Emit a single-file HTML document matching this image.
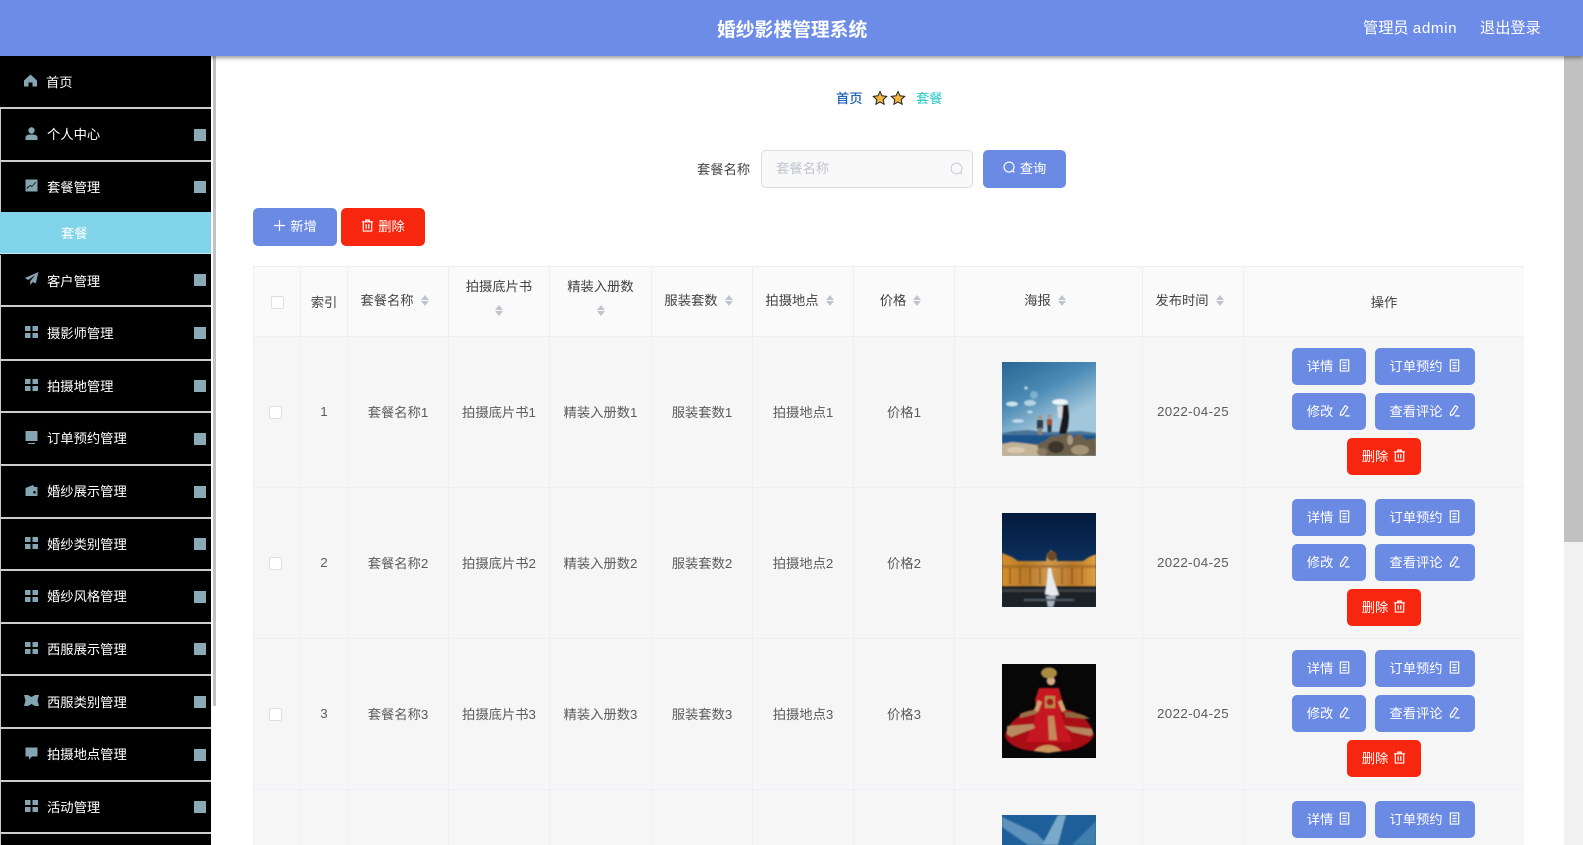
<!DOCTYPE html>
<html lang="zh-CN"><head><meta charset="utf-8"><title>婚纱影楼管理系统</title>
<style>
*{box-sizing:border-box}
html,body{margin:0;padding:0;width:1583px;height:845px;overflow:hidden;background:#fff}
body{position:relative;font-family:"Liberation Sans","Noto Sans CJK SC",sans-serif;font-size:13.3px;color:#666}
.hd{position:absolute;left:0;top:0;width:1583px;height:56px;background:#6d8ce7;box-shadow:0 2px 4px rgba(0,0,0,.4);z-index:5;color:#fff}
.hd div{position:absolute;white-space:nowrap;line-height:56px;top:1px}
.side{position:absolute;left:0;top:56px;width:211px;height:789px;background:#000}
.it{position:absolute;left:0;width:211px;background:#000;border-left:1px solid #c8c8c8;display:flex;align-items:center;color:#fff;font-size:13.3px}
.it span{position:absolute;left:46px;transform:translateY(-1px)}
.it svg{position:absolute;left:23px;top:50%;margin-top:-9px;width:15px;height:15px;fill:#86a5b2}
.it b{position:absolute;left:193px;top:50%;margin-top:-6px;width:12px;height:12px;background:#8aaab6}
.bar{position:absolute;left:0;width:211px;height:2px;background:#cdcdcd}
.sub{position:absolute;left:0;top:212px;width:211px;height:42px;background:#80d3e8;color:#fff;line-height:44px;padding-left:61px;border-bottom:1px solid #c8e6ee}
.t{position:absolute;white-space:nowrap}
.btn{position:absolute;height:37px;border-radius:5px;background:#6b8ae4;color:#fff;display:flex;align-items:center;justify-content:center;font-size:13.3px;white-space:nowrap;padding-bottom:2px}
.btn svg{width:13px;height:13px;fill:none;stroke:#fff;stroke-width:1.25;margin-left:5px;flex:none}
.btn.pre svg{margin:0 4px 0 0}
.red{background:#f7270f}
.wrap{position:absolute;left:253px;top:266px;width:1271px;height:579px;overflow:hidden}
table{width:1271px;border-collapse:collapse;table-layout:fixed;background:#f6f6f7}
th,td{border:1px solid #eeeff2;text-align:center;padding:0;font-weight:400;vertical-align:middle}
th{background:#fafafa;height:70px;color:#444;font-size:13.3px;line-height:25px;padding-top:1px}
th.s{padding:0 7px 2px 0}
th.m{padding:0 0 5px 0}
th.m .c{margin:0;position:relative;top:-1px}
td{height:151px;color:#5c5c5c;padding-bottom:2px}
td.d{letter-spacing:.4px}
.c{display:inline-block;width:8px;height:11px;margin-left:7px;vertical-align:-1px;position:relative}
.c:before,.c:after{content:"";position:absolute;left:0;border-left:4px solid transparent;border-right:4px solid transparent}
.c:before{top:0;border-bottom:5px solid #c0c4cc}
.c:after{bottom:0;border-top:5px solid #c0c4cc}
.cb{display:inline-block;width:13px;height:13px;background:#fff;border:1px solid #dcdfe6;border-radius:2px;vertical-align:middle}
td .cb{margin-left:-3px;position:relative;top:1px}
.pic{position:absolute;left:1002px;width:94px;height:94px;display:block}
</style></head><body>
<svg width="0" height="0" style="position:absolute"><defs>
<symbol id="doc" viewBox="0 0 14 14"><path d="M2.500 1h9v12h-9zM4.700 4h4.600M4.700 7h4.600M4.700 10h4.600"/></symbol>
<symbol id="pen" viewBox="0 0 14 14"><path d="M7.800 1.800l2.700 1.600-5 8-2.800.8-.1-2.700zM7.500 12.800h5"/></symbol>
<symbol id="bin" viewBox="0 0 14 14"><path d="M1 3h12M5 3V1.200h4V3M2.500 3v10h9V3M5.600 5.500v5M8.400 5.500v5"/></symbol>
<symbol id="find" viewBox="0 0 14 14"><circle cx="6.500" cy="6.500" r="5.400"/><path d="M10.500 10.500l1.800 1.800"/></symbol>
<symbol id="grid" viewBox="0 0 15 15"><path d="M1 2h5.500v5H1zM8.500 2H14v5H8.500zM1 9h5.500v5H1zM8.500 9H14v5H8.500z"/></symbol>
</defs></svg>

<div class="hd">
<div style="left:717px;width:150px;font-size:18.8px;font-weight:700;text-align:center;top:2px">婚纱影楼管理系统</div>
<div style="left:1363px;font-size:15.2px">管理员 <span style="letter-spacing:.6px">admin</span></div>
<div style="left:1480px;font-size:15.2px">退出登录</div>
</div>

<div class="side"></div>
<div class="it" style="top:56px;height:51px;border-left:0"><svg viewBox="0 0 15 15"><path d="M7.500 1.500L1 7.500V13.500H5.500V9.500H9.500V13.500H14V7.500z"/></svg><span style="transform:none">首页</span></div>
<div class="bar" style="top:107px"></div>
<div class="it" style="top:109px;height:51px"><svg viewBox="0 0 15 15"><circle cx="7.500" cy="4.500" r="3.200"/><path d="M1.500 14v-2.500c0-2 2-3 6-3s6 1 6 3V14z"/></svg><span>个人中心</span><b></b></div>
<div class="bar" style="top:160px"></div>
<div class="it" style="top:162px;height:50px"><svg viewBox="0 0 15 15"><path fill-rule="evenodd" d="M1.500 1.500h12v12h-12zM3 11l3-3 2 1 4-4.500-.6-.5L8 8 6 7l-3.500 3z"/></svg><span>套餐管理</span><b></b></div>
<div class="sub">套餐</div>
<div class="it" style="top:255px;height:50px"><svg viewBox="0 0 15 15"><path d="M14.500 1L.8 7l3.500 2 7-5-5 6v4l2.500-3 3 1.500z"/></svg><span style="transform:none">客户管理</span><b></b></div>
<div class="bar" style="top:305px"></div>
<div class="it" style="top:307px;height:52px"><svg><use href="#grid"/></svg><span>摄影师管理</span><b></b></div>
<div class="bar" style="top:359px"></div>
<div class="it" style="top:361px;height:50px"><svg><use href="#grid"/></svg><span>拍摄地管理</span><b></b></div>
<div class="bar" style="top:411px"></div>
<div class="it" style="top:413px;height:51px"><svg viewBox="0 0 15 15"><path d="M1.500 1h12v10h-12zM4 13h7v1H4z"/></svg><span>订单预约管理</span><b></b></div>
<div class="bar" style="top:464px"></div>
<div class="it" style="top:466px;height:51px"><svg viewBox="0 0 15 15"><path fill-rule="evenodd" d="M1.500 5L9 2l1.500 2h3v9h-12zM10.500 8a1.300 1.300 0 100 2.600 1.300 1.300 0 000-2.600z"/></svg><span>婚纱展示管理</span><b></b></div>
<div class="bar" style="top:517px"></div>
<div class="it" style="top:519px;height:50px"><svg><use href="#grid"/></svg><span>婚纱类别管理</span><b></b></div>
<div class="bar" style="top:569px"></div>
<div class="it" style="top:571px;height:51px"><svg><use href="#grid"/></svg><span>婚纱风格管理</span><b></b></div>
<div class="bar" style="top:622px"></div>
<div class="it" style="top:624px;height:50px"><svg><use href="#grid"/></svg><span>西服展示管理</span><b></b></div>
<div class="bar" style="top:674px"></div>
<div class="it" style="top:676px;height:51px"><svg viewBox="0 0 15 15"><path d="M0 2h4l3.500 2L11 2h4l-1.500 5.500L15 13h-4L7.500 11 4 13H0l1.500-5.500z"/></svg><span style="transform:none">西服类别管理</span><b></b></div>
<div class="bar" style="top:727px"></div>
<div class="it" style="top:729px;height:51px"><svg viewBox="0 0 15 15"><path d="M1.500 1.500h12v9H8l-3 3v-3H1.500z"/></svg><span>拍摄地点管理</span><b></b></div>
<div class="bar" style="top:780px"></div>
<div class="it" style="top:782px;height:50px"><svg><use href="#grid"/></svg><span>活动管理</span><b></b></div>
<div class="bar" style="top:832px"></div>
<div class="it" style="top:834px;height:11px"></div>
<div style="position:absolute;left:213px;top:56px;width:3px;height:650px;background:#c2c2c2"></div>

<div style="position:absolute;left:1564px;top:56px;width:19px;height:789px;background:#f1f1f1"></div>
<div style="position:absolute;left:1564px;top:56px;width:19px;height:486px;background:#c1c1c1"></div>

<div class="t" style="left:836px;top:89px;line-height:20px;color:#1f5fb2;font-weight:500">首页</div>
<svg style="position:absolute;left:872px;top:90px" width="34" height="16" viewBox="0 0 34 16"><path d="M8 1.500l2 4.300 4.700.6-3.500 3.200.9 4.700L8 12l-4.100 2.300.9-4.700L1.300 6.400 6 5.800z" fill="#f5b53c" stroke="#222" stroke-width="1"/><path d="M26 1.500l2 4.300 4.700.6-3.500 3.200.9 4.700L26 12l-4.100 2.300.9-4.700-3.500-3.200 4.700-.6z" fill="#f5b53c" stroke="#222" stroke-width="1"/></svg>
<div class="t" style="left:916px;top:89px;line-height:20px;color:#25c6c8">套餐</div>

<div class="t" style="left:697px;top:160px;line-height:20px;color:#444">套餐名称</div>
<div style="position:absolute;left:761px;top:150px;width:212px;height:38px;background:#f9f9f9;border:1px solid #dcdcdc;border-radius:5px"></div>
<div class="t" style="left:776px;top:159px;line-height:20px;color:#c0c4cc">套餐名称</div>
<svg style="position:absolute;left:950px;top:162px;fill:none;stroke:#c8cbd0;stroke-width:1" width="14" height="14"><use href="#find"/></svg>
<div class="btn pre" style="left:983px;top:150px;width:83px;height:38px;padding-bottom:4px"><svg><use href="#find"/></svg>查询</div>

<div class="btn pre" style="left:253px;top:208px;width:84px;height:38px;padding-bottom:4px"><svg viewBox="0 0 14 14"><path d="M7 1v12M1 7h12"/></svg>新增</div>
<div class="btn pre red" style="left:341px;top:208px;width:84px;height:38px;padding-bottom:4px"><svg><use href="#bin"/></svg>删除</div>

<div class="wrap"><table>
<colgroup><col style="width:47px"><col style="width:47px"><col style="width:101px"><col style="width:101px"><col style="width:102px"><col style="width:101px"><col style="width:101px"><col style="width:101px"><col style="width:188px"><col style="width:101px"><col style="width:281px"></colgroup>
<tr>
<th><i class="cb"></i></th><th>索引</th><th class="s">套餐名称<i class="c"></i></th><th class="m">拍摄底片书<br><i class="c"></i></th><th class="m">精装入册数<br><i class="c"></i></th><th class="s">服装套数<i class="c"></i></th><th class="s">拍摄地点<i class="c"></i></th><th class="s">价格<i class="c"></i></th><th class="s">海报<i class="c"></i></th><th class="s">发布时间<i class="c"></i></th><th style="padding-top:2px">操作</th>
</tr>
<tr><td><i class="cb"></i></td><td>1</td><td>套餐名称1</td><td>拍摄底片书1</td><td>精装入册数1</td><td>服装套数1</td><td>拍摄地点1</td><td>价格1</td><td></td><td class="d">2022-04-25</td><td></td></tr>
<tr><td><i class="cb"></i></td><td>2</td><td>套餐名称2</td><td>拍摄底片书2</td><td>精装入册数2</td><td>服装套数2</td><td>拍摄地点2</td><td>价格2</td><td></td><td class="d">2022-04-25</td><td></td></tr>
<tr><td><i class="cb"></i></td><td>3</td><td>套餐名称3</td><td>拍摄底片书3</td><td>精装入册数3</td><td>服装套数3</td><td>拍摄地点3</td><td>价格3</td><td></td><td class="d">2022-04-25</td><td></td></tr>
<tr><td></td><td></td><td></td><td></td><td></td><td></td><td></td><td></td><td></td><td></td><td></td></tr>
</table></div>

<svg class="pic" style="top:362px" viewBox="0 0 94 94"><defs><linearGradient id="g1" x1="0" y1="0" x2=".5" y2="1"><stop offset="0" stop-color="#2a6694"/><stop offset=".4" stop-color="#4a8ab4"/><stop offset=".75" stop-color="#a2c6da"/></linearGradient><filter id="b" x="-10%" y="-10%" width="120%" height="120%"><feGaussianBlur stdDeviation=".9"/></filter><clipPath id="cp"><rect width="94" height="94"/></clipPath></defs>
<rect width="94" height="94" fill="url(#g1)"/><g filter="url(#b)" clip-path="url(#cp)">
<ellipse cx="10" cy="42" rx="6" ry="2.500" fill="#cfe2ec"/><ellipse cx="28" cy="41" rx="6" ry="3" fill="#b8d4e3"/><ellipse cx="58" cy="40" rx="8" ry="3" fill="#eef4f7"/><ellipse cx="16" cy="59" rx="6" ry="1.800" fill="#c5dce8"/><ellipse cx="28" cy="50" rx="3" ry="1.500" fill="#bcd7e5"/><circle cx="24" cy="26" r="1.800" fill="#b4d3e4"/><ellipse cx="32" cy="33" rx="4" ry="4" fill="#7fb0ce"/>
<path d="M0 71l12-2 14-1 16 2 20 0 16-1 16 2v3H0z" fill="#4a7398"/><rect y="73" width="94" height="11" fill="#1c548c"/>
<path d="M0 82l10-2 10 1 15 2 10 11H0z" fill="#c2b296"/><path d="M35 82l8-3 6-5 8 0 8-3 7 4 6-3 6 6 10-2v18H38z" fill="#6c604c"/><ellipse cx="54" cy="85" rx="8" ry="6" fill="#3c352c"/><ellipse cx="78" cy="88" rx="9" ry="5" fill="#a59478"/><ellipse cx="68" cy="78" rx="3" ry="5" fill="#a89a80"/><ellipse cx="40" cy="90" rx="5" ry="4" fill="#8a7c64"/><ellipse cx="14" cy="88" rx="9" ry="3" fill="#d8cab0"/>
<path d="M60 43h6l1 12-1 10-2 7h-7l3-15z" fill="#14161d"/><path d="M55 44h6l-1 12h-4z" fill="#d9dbe0"/><rect x="35" y="58" width="6" height="9" fill="#2f3a4a"/><rect x="36" y="66" width="4" height="7" fill="#8a7f72"/><rect x="45" y="57" width="5" height="7" fill="#a2502f"/><rect x="45.500" y="63" width="4" height="7" fill="#2a3444"/><circle cx="38" cy="55" r="1.800" fill="#b58a6c"/><circle cx="47.500" cy="54" r="1.800" fill="#b58a6c"/></g></svg>

<svg class="pic" style="top:513px" viewBox="0 0 94 94"><defs><linearGradient id="g2" x1="0" y1="0" x2="0" y2="1"><stop offset="0" stop-color="#04193c"/><stop offset=".5" stop-color="#0b2f5c"/></linearGradient><linearGradient id="g3" x1="0" y1="0" x2="1" y2="0"><stop offset="0" stop-color="#d48f2c"/><stop offset=".25" stop-color="#b9792a"/><stop offset=".5" stop-color="#cf9a4e"/><stop offset=".75" stop-color="#b8772a"/><stop offset="1" stop-color="#e0a040"/></linearGradient></defs>
<rect width="94" height="94" fill="url(#g2)"/><g filter="url(#b)" clip-path="url(#cp)"><path d="M0 40l10 4 6 4h28l1-7 4-4 5 4 1 7h26l6-4 7-3v35H0z" fill="url(#g3)"/><path d="M0 52h94v3H0z" fill="#8d5a1e" opacity=".5"/><path d="M8 55v16M18 55v16M28 55v16M38 55v16M60 55v16M70 55v16M80 55v16" stroke="#7a4a16" stroke-width="1.500" opacity=".65"/><rect y="73" width="94" height="21" fill="#1a2027"/><rect y="76" width="94" height="3" fill="#3a3f42"/><path d="M46 55h3l2 10 6 17-7 1-7-2 2-12z" fill="#e8ecf0"/><path d="M44 83h10l-3 11h-5z" fill="#a9b4c0"/><path d="M22 86h50v2H22z" fill="#4e5864"/><ellipse cx="50" cy="43" rx="5" ry="5" fill="#6a4a26"/></g></svg>

<svg class="pic" style="top:664px" viewBox="0 0 94 94"><rect width="94" height="94" fill="#070707"/><g filter="url(#b)" clip-path="url(#cp)"><path d="M3 72c2-12 14-24 32-27l8-2h10l8 2c16 2 28 12 31 26-4 10-18 17-45 17S6 82 3 72z" fill="#a90d18"/><path d="M37 24h20l3 12-2 12 12 30H24l11-30-2-12z" fill="#c61622"/><path d="M18 50c6-3 12-4 18-4l-2 4-16 4z" fill="#9c7046"/><path d="M62 48c10 0 20 2 26 7l-24-2z" fill="#8f6a40"/><path d="M5 62l26-2 2 4L9 73 5 70z" fill="#b98a62"/><path d="M62 62l28 3 1 5-3 2-18-4z" fill="#b58660"/><path d="M32 87c6-8 22-8 27 0l-13 2z" fill="#cc935c"/><circle cx="49" cy="17" r="4.300" fill="#d6a98a"/><ellipse cx="47" cy="9" rx="8" ry="5.500" fill="#a98b43"/><path d="M43 32h10v12H43z" fill="#b98a4a"/><ellipse cx="48" cy="38" rx="3.500" ry="3.500" fill="#a8141e"/><path d="M46 52h6l3 24h-8z" fill="#c4895a"/><path d="M36 36l-4 10 4 2 4-10zM60 36l4 10-4 2-4-10z" fill="#d2a070"/></g></svg>

<svg class="pic" style="top:815px;height:30px" viewBox="0 0 94 30" preserveAspectRatio="none"><rect width="94" height="30" fill="#1f5f99"/><g filter="url(#b)"><path d="M0 2l34 16 12 12H26L0 12z" fill="#5d93bd"/><path d="M56 0h8l-8 30H40z" fill="#7aa8c9"/><path d="M94 6L70 30h24z" fill="#3f7fae"/></g></svg>

<div class="btn" style="left:1292px;top:348px;width:74px">详情<svg><use href="#doc"/></svg></div>
<div class="btn" style="left:1375px;top:348px;width:100px">订单预约<svg><use href="#doc"/></svg></div>
<div class="btn" style="left:1292px;top:393px;width:74px">修改<svg><use href="#pen"/></svg></div>
<div class="btn" style="left:1375px;top:393px;width:100px">查看评论<svg><use href="#pen"/></svg></div>
<div class="btn red" style="left:1347px;top:438px;width:74px">删除<svg><use href="#bin"/></svg></div>

<div class="btn" style="left:1292px;top:499px;width:74px">详情<svg><use href="#doc"/></svg></div>
<div class="btn" style="left:1375px;top:499px;width:100px">订单预约<svg><use href="#doc"/></svg></div>
<div class="btn" style="left:1292px;top:544px;width:74px">修改<svg><use href="#pen"/></svg></div>
<div class="btn" style="left:1375px;top:544px;width:100px">查看评论<svg><use href="#pen"/></svg></div>
<div class="btn red" style="left:1347px;top:589px;width:74px">删除<svg><use href="#bin"/></svg></div>

<div class="btn" style="left:1292px;top:650px;width:74px">详情<svg><use href="#doc"/></svg></div>
<div class="btn" style="left:1375px;top:650px;width:100px">订单预约<svg><use href="#doc"/></svg></div>
<div class="btn" style="left:1292px;top:695px;width:74px">修改<svg><use href="#pen"/></svg></div>
<div class="btn" style="left:1375px;top:695px;width:100px">查看评论<svg><use href="#pen"/></svg></div>
<div class="btn red" style="left:1347px;top:740px;width:74px">删除<svg><use href="#bin"/></svg></div>

<div class="btn" style="left:1292px;top:801px;width:74px">详情<svg><use href="#doc"/></svg></div>
<div class="btn" style="left:1375px;top:801px;width:100px">订单预约<svg><use href="#doc"/></svg></div>
</body></html>
